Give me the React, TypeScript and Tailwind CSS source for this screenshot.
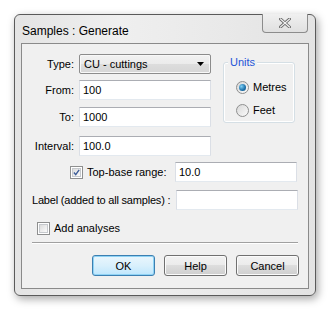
import React from "react";

const font = { fontFamily: '"Liberation Sans", Arial, sans-serif' };

function TextBox({ value, className }: { value?: string; className: string }) {
  return (
    <div
      className={`h-[20px] border border-[#abadb3] border-l-[#dbdfe6] border-r-[#dbdfe6] border-b-[#e3e9ef] bg-white pl-[3px] flex items-center text-[11px] text-black ${className}`}
    >
      {value}
    </div>
  );
}

function Checkbox({ checked }: { checked?: boolean }) {
  return (
    <div className="w-[13px] h-[13px] border border-[#8e8f8f] bg-white p-[1px] shrink-0">
      <div className="w-full h-full border border-[#c6c9cd] bg-gradient-to-br from-[#dcdcdc] to-[#fbfbfb] relative">
        {checked && (
          <svg viewBox="0 0 9 9" className="absolute inset-0 w-full h-full">
            <path d="M1.2 4.6 L3.5 7.2 L7.9 1.2" fill="none" stroke="#3c5c98" strokeWidth="1.8" />
          </svg>
        )}
      </div>
    </div>
  );
}

function Radio({ checked }: { checked?: boolean }) {
  return (
    <div className="w-[13px] h-[13px] rounded-full border border-[#8e8f8f] bg-gradient-to-br from-[#d8d8d8] to-[#fbfbfb] flex items-center justify-center shrink-0">
      {checked && (
        <div className="w-[7px] h-[7px] rounded-full bg-[radial-gradient(circle_at_35%_35%,#7fd0f5,#1c6fa8_60%,#0c4f80)]" />
      )}
    </div>
  );
}

function Button({ label, isDefault }: { label: string; isDefault?: boolean }) {
  return (
    <div
      className={`w-[63px] h-[21px] rounded-[3px] border flex items-center justify-center text-[11px] text-black ${
        isDefault
          ? "border-[#3c7fb1] shadow-[inset_0_0_0_1px_#8fd3f5] bg-gradient-to-b from-[#eaf6fd] via-[#d9f0fc] to-[#bee6fd]"
          : "border-[#707070] shadow-[inset_0_0_0_1px_#fbfbfb] bg-[linear-gradient(#f2f2f2_0%,#ebebeb_50%,#dddddd_50%,#cfcfcf_100%)]"
      }`}
    >
      {label}
    </div>
  );
}

export default function App() {
  return (
    <div className="w-[333px] h-[311px] bg-white pt-[14px] pl-[14px]" style={font}>
      <div className="w-[302px] h-[282px] rounded-[6px] border border-[#5a5a5a] bg-[linear-gradient(90deg,#e4e4e4,#efefef_35%,#e9e9e9_70%,#e3e3e3)] shadow-[2px_3px_8px_rgba(0,0,0,0.35)] flex flex-col">
        <div className="h-[28px] flex items-start justify-between pl-[7px] pr-[7px]">
          <span className="text-[12px] text-black mt-[7px]">Samples : Generate</span>
          <div className="w-[46px] h-[19px] border border-t-0 border-[#8c8c8c] rounded-b-[4px] bg-[linear-gradient(#f0f0f0,#e0e0e0)] flex items-center justify-center mt-[-1px]">
            <svg viewBox="0 0 12 10" className="w-[12px] h-[10px]">
              <path d="M1.5 1 L10.5 9 M10.5 1 L1.5 9" stroke="#6b6b6b" strokeWidth="3" strokeLinecap="square" />
              <path d="M1.5 1 L10.5 9 M10.5 1 L1.5 9" stroke="#f4f4f4" strokeWidth="1.2" strokeLinecap="square" />
            </svg>
          </div>
        </div>
        <div className="ml-[6px] w-[288px] h-[246px] border border-[#8a8a8a] bg-[#f0f0f0] flex flex-col text-[11px] leading-[16px] text-black whitespace-nowrap">
          <div className="flex mt-[10px]">
            <div className="flex flex-col">
              <div className="flex items-center">
                <span className="w-[57px] text-right pr-[5px]">Type:</span>
                <div className="w-[132px] h-[20px] rounded-[2px] border border-[#8c8c8c] shadow-[inset_0_0_0_1px_#f8f8f8] bg-[linear-gradient(#f2f2f2_0%,#ebebeb_50%,#dddddd_50%,#d6d6d6_100%)] flex items-center justify-between pl-[4px] pr-[6px]">
                  <span>CU - cuttings</span>
                  <svg viewBox="0 0 7 4" className="w-[7px] h-[4px]">
                    <path d="M0 0 H7 L3.5 4 Z" fill="#000" />
                  </svg>
                </div>
              </div>
              <div className="flex items-center mt-[6px]">
                <span className="w-[57px] text-right pr-[5px]">From:</span>
                <TextBox value="100" className="w-[132px]" />
              </div>
              <div className="flex items-center mt-[7px]">
                <span className="w-[57px] text-right pr-[5px]">To:</span>
                <TextBox value="1000" className="w-[132px]" />
              </div>
              <div className="flex items-center mt-[9px]">
                <span className="w-[57px] text-right pr-[5px]">Interval:</span>
                <TextBox value="100.0" className="w-[132px]" />
              </div>
            </div>
            <div className="ml-[12px] mt-[1px] relative w-[72px] h-[68px]">
              <div className="absolute left-0 right-0 top-[7px] bottom-0 border border-[#d5dfe5] rounded-[3px] shadow-[inset_0_0_0_1px_#ffffff]" />
              <span className="absolute left-[5px] top-[1px] px-[2px] bg-[#f0f0f0] text-[#2455d8] text-[11px] leading-[13px]">Units</span>
              <div className="absolute left-[13px] top-[24px] flex items-center gap-[4px]">
                <Radio checked />
                <span>Metres</span>
              </div>
              <div className="absolute left-[13px] top-[47px] flex items-center gap-[4px]">
                <Radio />
                <span>Feet</span>
              </div>
            </div>
          </div>
          <div className="flex items-center mt-[6px]">
            <div className="ml-[48px]">
              <Checkbox checked />
            </div>
            <span className="ml-[4px] w-[88px]">Top-base range:</span>
            <TextBox value="10.0" className="w-[122px]" />
          </div>
          <div className="flex items-center mt-[8px]">
            <span className="ml-[10px] w-[144px] tracking-[-0.2px]">Label (added to all samples) :</span>
            <TextBox className="w-[122px]" />
          </div>
          <div className="flex items-center mt-[10px] ml-[15px]">
            <Checkbox />
            <span className="ml-[4px]">Add analyses</span>
          </div>
          <div className="mt-[6px] ml-[10px] w-[266px] h-[2px] border-t border-[#a0a0a0] border-b border-b-white" />
          <div className="flex mt-[11px] ml-[70px] gap-[9px]">
            <Button label="OK" isDefault />
            <Button label="Help" />
            <Button label="Cancel" />
          </div>
        </div>
      </div>
    </div>
  );
}
